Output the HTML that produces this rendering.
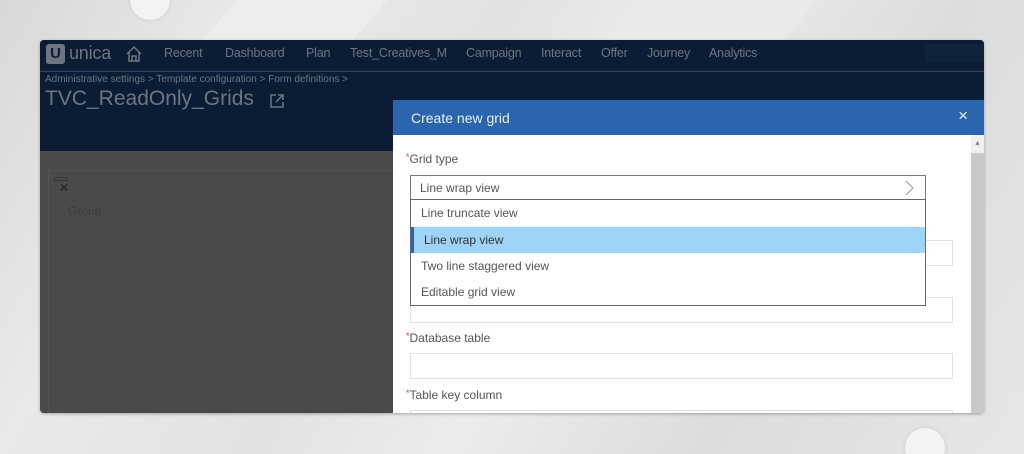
<!DOCTYPE html>
<html><head><meta charset="utf-8"><style>
*{margin:0;padding:0;box-sizing:border-box}
html{width:1024px;height:454px;overflow:hidden;background:#e4e4e4}
body{width:1024px;height:454px;overflow:hidden;font-family:"Liberation Sans",sans-serif;background:linear-gradient(120deg,#d8d8d8 0%,#e9e9e9 20%,#e2e2e2 40%,#ececec 55%,#dcdcdc 75%,#e6e6e6 100%);position:relative}
.stripe{position:absolute;top:0;height:40px;background:#efefef;transform:skewX(-40deg)}
.win{position:absolute;left:40px;top:40px;width:944px;height:373px;border-radius:4px;overflow:hidden;background:#4a4a4a;box-shadow:0 1px 3px rgba(0,0,0,.3)}
.nav{position:absolute;left:0;top:0;width:944px;height:111px;background:#0a1d35}
.sep{position:absolute;left:0;top:31px;width:944px;height:1px;background:#3a4656}
.nav span{position:absolute;top:6px;color:#6d7580;font-size:12.5px;letter-spacing:-0.2px}
.t{position:absolute;color:#6d7580}
.modal{position:absolute;left:393px;top:100px;width:591px;height:313px;background:#fff;overflow:hidden}
.mh{height:35px;background:#2b65ad;color:#e8eef7;font-size:14px;padding:10px 18px}
.lbl{position:absolute;left:13px;font-size:12px;color:#555}
.lbl b{color:#d33;font-weight:normal;font-size:9px;vertical-align:top}
.inp{position:absolute;left:17px;width:543px;height:26px;border:1px solid #e2e2e2}
.item{position:absolute;left:0;width:514px;height:26px;font-size:12px;color:#555;padding:6px 10px}
</style></head><body>
<div class="stripe" style="left:220px;width:150px;background:#ededed"></div>
<div class="stripe" style="left:620px;width:180px;background:#eaeaea"></div>
<div style="position:absolute;left:905px;top:428px;width:40px;height:40px;border-radius:50%;background:#f3f3f3;box-shadow:0 0 4px rgba(0,0,0,.1)"></div>
<div style="position:absolute;left:130px;top:-20px;width:40px;height:40px;border-radius:50%;background:#f3f3f3;box-shadow:0 0 4px rgba(0,0,0,.1)"></div>
<div class="win">
 <div class="nav">
  <div style="position:absolute;left:6px;top:4px;width:19px;height:20px;background:#6d7580;border-radius:3px;color:#0b1e36;font-weight:bold;font-size:15px;text-align:center;line-height:20px">U</div>
  <span style="left:29px;top:3px;font-size:18px">unica</span>
  <svg style="position:absolute;left:85px;top:5px" width="18" height="18" viewBox="0 0 18 18" fill="none" stroke="#6d7580" stroke-width="1.5"><path d="M2 9 9 2l7 7M4 7v9h10V7M7 16v-5h4v5"/></svg>
  <span style="left:124px">Recent</span><span style="left:185px">Dashboard</span><span style="left:266px">Plan</span><span style="left:310px">Test_Creatives_M</span><span style="left:426px">Campaign</span><span style="left:501px">Interact</span><span style="left:561px">Offer</span><span style="left:607px">Journey</span><span style="left:669px">Analytics</span>
  <div style="position:absolute;left:885px;top:4px;width:59px;height:18px;background:#0f2339"></div>
  <div class="sep"></div>
  <div class="t" style="left:5px;top:34px;font-size:10px">Administrative settings &gt; Template configuration &gt; Form definitions &gt;</div>
  <div class="t" style="left:5px;top:47px;font-size:21px">TVC_ReadOnly_Grids</div>
  <svg style="position:absolute;left:230px;top:54px" width="14" height="14" viewBox="0 0 14 14" fill="none" stroke="#6d7580" stroke-width="1.5"><path d="M6 1H1v12h12V8M8 1h5v5M13 1 6 8"/></svg>
 </div>
 <div style="position:absolute;left:8px;top:130px;width:940px;height:250px;border:1px solid #525252"></div>
 <div style="position:absolute;left:14px;top:137px;width:14px;height:4px;border:1px solid #3a3a3a"></div>
 <div class="t" style="left:20px;top:139px;font-size:14px;color:#2a2a2a;font-weight:bold">×</div>
 <div class="t" style="left:28px;top:164px;font-size:12px;color:#3c3c3c">Group</div>
</div>
<div class="modal">
 <div class="mh">Create new grid<span style="position:absolute;right:16px;top:6px;font-size:17px">×</span></div>
 <div style="position:absolute;left:578px;top:35px;width:13px;height:278px;background:#c8c8c8"><div style="height:18px;background:#f0f0f0;font-size:7px;color:#888;text-align:center;line-height:18px">▲</div></div>
 <div class="lbl" style="top:52px"><b>*</b>Grid type</div>
 <div class="inp" style="top:140px"></div>
 <div class="inp" style="top:197px"></div>
 <div class="lbl" style="top:231px"><b>*</b>Database table</div>
 <div class="inp" style="top:253px"></div>
 <div class="lbl" style="top:288px"><b>*</b>Table key column</div>
 <div class="inp" style="top:310px"></div>
 <div style="position:absolute;left:17px;top:75px;width:516px;height:25px;border:1px solid #777;font-size:12px;color:#555;padding:5px 9px">Line wrap view<svg style="position:absolute;right:10px;top:4px" width="10" height="16" viewBox="0 0 10 16" fill="none" stroke="#999"><path d="M1 1l7 7-7 7"/></svg></div>
 <div style="position:absolute;left:17px;top:99px;width:516px;height:107px;border:1px solid #666;background:#fff">
  <div class="item" style="top:0">Line truncate view</div>
  <div class="item" style="top:27px;background:#9fd3f5;border-left:3px solid #2b65ad;color:#333">Line wrap view</div>
  <div class="item" style="top:53px">Two line staggered view</div>
  <div class="item" style="top:79px">Editable grid view</div>
 </div>
</div>
</body></html>
